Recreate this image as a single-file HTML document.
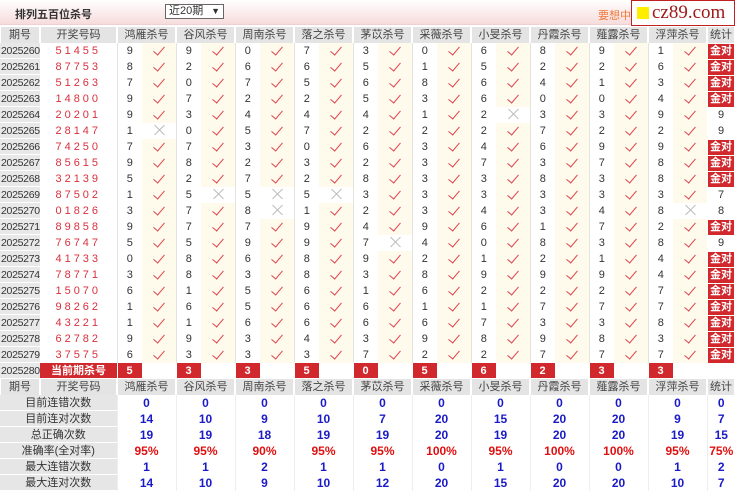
<!DOCTYPE html>
<html><head><meta charset="utf-8">
<style>
body{margin:0;width:735px;height:493px;overflow:hidden;background:#fff;font:11px "Liberation Sans","Noto Sans CJK SC",sans-serif;color:#333}
.top{position:relative;height:25px;margin-bottom:2px;background:linear-gradient(#fff,#f7dcdc);border-bottom:1px solid #f0d0d0;box-sizing:border-box}
.top .tt{position:absolute;left:15px;top:6px;font-weight:bold;font-size:11px;color:#333}
.top .sel{position:absolute;left:165px;top:4px;width:54px;height:13px;border:1px solid #666;background:#fff;font-size:11px;line-height:13px;padding-left:3px;box-sizing:content-box}
.top .sel span{position:absolute;right:3px;top:0;font-size:9px;font-weight:bold}
.top .yx{position:absolute;left:598px;top:7px;color:#f07838;font-size:11px}
.logo{position:absolute;left:631px;top:0;width:104px;height:26px;border:1px solid #c02020;background:#fff;box-sizing:border-box}
.logo .sq{position:absolute;left:5px;top:6px;width:12px;height:12px;background:#ffee00}
.logo .tx{position:absolute;left:20px;top:1px;font:19px "Liberation Serif",serif;color:#a01818;line-height:22px}
table{border-collapse:collapse;table-layout:fixed;width:735px}
td{height:16px;padding:0;text-align:center;line-height:16px;white-space:nowrap}
.h td{background:#e4e4e4;box-shadow:inset 1px 0 #fff,inset -1px 0 #fff;color:#444}
.q{background:linear-gradient(#e8e8e8 15px,#fff 15px);color:#333;font-size:10.5px;letter-spacing:-0.3px;text-align:left;padding-left:1px}
.k{color:#d8303c;letter-spacing:3px}
.n{border-left:1px solid #e4e4dc;color:#333}
.y{background:#fffbec}
.t{color:#333}
.t b{display:block;margin:0 1px;background:#d0282c;color:#fff;font-weight:bold;height:15px;line-height:15px}
i.c{display:inline-block;width:5px;height:10px;border:solid #e0404a;border-width:0 1.6px 1.6px 0;transform:rotate(40deg);margin-top:-4px;vertical-align:middle}
i.x{display:inline-block;position:relative;width:12px;height:12px;vertical-align:middle;margin-top:-2px}
i.x:before,i.x:after{content:"";position:absolute;left:6px;top:-1px;width:1px;height:14px;background:#b8b8b8;transform:rotate(45deg)}
i.x:after{transform:rotate(-45deg)}
.cur td.kr{background:#d0282c;color:#fff;font-weight:bold;box-shadow:inset 0 -1px #fff}
.cur td.r{background:#d0282c;color:#fff;font-weight:bold;box-shadow:inset 0 -1px #fff,inset 1px 0 #fff}
.s td.l{background:#e6e6e6;box-shadow:inset 0 -1px #fff;color:#333}
.s td.v{color:#1a1ac8;font-weight:bold;font-size:12px;border-left:1px solid #eee}
.s td.p{color:#e01010;font-weight:bold;font-size:12px;border-left:1px solid #eee}
</style></head><body>
<div class="top"><div class="tt">排列五百位杀号</div><div class="sel">近20期<span>▼</span></div><div class="yx">要想中</div>
<div class="logo"><div class="sq"></div><div class="tx">cz89.com</div></div></div>
<table>
<colgroup><col style="width:40px"><col style="width:77px">
<col style="width:25px"><col style="width:34px"><col style="width:25px"><col style="width:34px"><col style="width:25px"><col style="width:34px"><col style="width:25px"><col style="width:34px"><col style="width:25px"><col style="width:34px"><col style="width:25px"><col style="width:34px"><col style="width:25px"><col style="width:34px"><col style="width:25px"><col style="width:34px"><col style="width:25px"><col style="width:34px"><col style="width:25px"><col style="width:34px"><col style="width:28px"></colgroup>
<tr class="h"><td>期号</td><td>开奖号码</td><td colspan="2">鸿雁杀号</td><td colspan="2">谷风杀号</td><td colspan="2">周南杀号</td><td colspan="2">落之杀号</td><td colspan="2">茅苡杀号</td><td colspan="2">采薇杀号</td><td colspan="2">小旻杀号</td><td colspan="2">丹霞杀号</td><td colspan="2">薤露杀号</td><td colspan="2">浮萍杀号</td><td>统计</td></tr>
<tr><td class="q">2025260</td><td class="k">51455</td><td class="n">9</td><td class="y"><i class="c"></i></td><td class="n">9</td><td class="y"><i class="c"></i></td><td class="n">0</td><td class="y"><i class="c"></i></td><td class="n">7</td><td class="y"><i class="c"></i></td><td class="n">3</td><td class="y"><i class="c"></i></td><td class="n">0</td><td class="y"><i class="c"></i></td><td class="n">6</td><td class="y"><i class="c"></i></td><td class="n">8</td><td class="y"><i class="c"></i></td><td class="n">9</td><td class="y"><i class="c"></i></td><td class="n">1</td><td class="y"><i class="c"></i></td><td class="t"><b>金对</b></td></tr>
<tr><td class="q">2025261</td><td class="k">87753</td><td class="n">8</td><td class="y"><i class="c"></i></td><td class="n">2</td><td class="y"><i class="c"></i></td><td class="n">6</td><td class="y"><i class="c"></i></td><td class="n">6</td><td class="y"><i class="c"></i></td><td class="n">5</td><td class="y"><i class="c"></i></td><td class="n">1</td><td class="y"><i class="c"></i></td><td class="n">5</td><td class="y"><i class="c"></i></td><td class="n">2</td><td class="y"><i class="c"></i></td><td class="n">2</td><td class="y"><i class="c"></i></td><td class="n">6</td><td class="y"><i class="c"></i></td><td class="t"><b>金对</b></td></tr>
<tr><td class="q">2025262</td><td class="k">51263</td><td class="n">7</td><td class="y"><i class="c"></i></td><td class="n">0</td><td class="y"><i class="c"></i></td><td class="n">7</td><td class="y"><i class="c"></i></td><td class="n">5</td><td class="y"><i class="c"></i></td><td class="n">6</td><td class="y"><i class="c"></i></td><td class="n">8</td><td class="y"><i class="c"></i></td><td class="n">6</td><td class="y"><i class="c"></i></td><td class="n">4</td><td class="y"><i class="c"></i></td><td class="n">1</td><td class="y"><i class="c"></i></td><td class="n">3</td><td class="y"><i class="c"></i></td><td class="t"><b>金对</b></td></tr>
<tr><td class="q">2025263</td><td class="k">14800</td><td class="n">9</td><td class="y"><i class="c"></i></td><td class="n">7</td><td class="y"><i class="c"></i></td><td class="n">2</td><td class="y"><i class="c"></i></td><td class="n">2</td><td class="y"><i class="c"></i></td><td class="n">5</td><td class="y"><i class="c"></i></td><td class="n">3</td><td class="y"><i class="c"></i></td><td class="n">6</td><td class="y"><i class="c"></i></td><td class="n">0</td><td class="y"><i class="c"></i></td><td class="n">0</td><td class="y"><i class="c"></i></td><td class="n">4</td><td class="y"><i class="c"></i></td><td class="t"><b>金对</b></td></tr>
<tr><td class="q">2025264</td><td class="k">20201</td><td class="n">9</td><td class="y"><i class="c"></i></td><td class="n">3</td><td class="y"><i class="c"></i></td><td class="n">4</td><td class="y"><i class="c"></i></td><td class="n">4</td><td class="y"><i class="c"></i></td><td class="n">4</td><td class="y"><i class="c"></i></td><td class="n">1</td><td class="y"><i class="c"></i></td><td class="n">2</td><td><i class="x"></i></td><td class="n">3</td><td class="y"><i class="c"></i></td><td class="n">3</td><td class="y"><i class="c"></i></td><td class="n">9</td><td class="y"><i class="c"></i></td><td class="t">9</td></tr>
<tr><td class="q">2025265</td><td class="k">28147</td><td class="n">1</td><td><i class="x"></i></td><td class="n">0</td><td class="y"><i class="c"></i></td><td class="n">5</td><td class="y"><i class="c"></i></td><td class="n">7</td><td class="y"><i class="c"></i></td><td class="n">2</td><td class="y"><i class="c"></i></td><td class="n">2</td><td class="y"><i class="c"></i></td><td class="n">2</td><td class="y"><i class="c"></i></td><td class="n">7</td><td class="y"><i class="c"></i></td><td class="n">2</td><td class="y"><i class="c"></i></td><td class="n">2</td><td class="y"><i class="c"></i></td><td class="t">9</td></tr>
<tr><td class="q">2025266</td><td class="k">74250</td><td class="n">7</td><td class="y"><i class="c"></i></td><td class="n">7</td><td class="y"><i class="c"></i></td><td class="n">3</td><td class="y"><i class="c"></i></td><td class="n">0</td><td class="y"><i class="c"></i></td><td class="n">6</td><td class="y"><i class="c"></i></td><td class="n">3</td><td class="y"><i class="c"></i></td><td class="n">4</td><td class="y"><i class="c"></i></td><td class="n">6</td><td class="y"><i class="c"></i></td><td class="n">9</td><td class="y"><i class="c"></i></td><td class="n">9</td><td class="y"><i class="c"></i></td><td class="t"><b>金对</b></td></tr>
<tr><td class="q">2025267</td><td class="k">85615</td><td class="n">9</td><td class="y"><i class="c"></i></td><td class="n">8</td><td class="y"><i class="c"></i></td><td class="n">2</td><td class="y"><i class="c"></i></td><td class="n">3</td><td class="y"><i class="c"></i></td><td class="n">2</td><td class="y"><i class="c"></i></td><td class="n">3</td><td class="y"><i class="c"></i></td><td class="n">7</td><td class="y"><i class="c"></i></td><td class="n">3</td><td class="y"><i class="c"></i></td><td class="n">7</td><td class="y"><i class="c"></i></td><td class="n">8</td><td class="y"><i class="c"></i></td><td class="t"><b>金对</b></td></tr>
<tr><td class="q">2025268</td><td class="k">32139</td><td class="n">5</td><td class="y"><i class="c"></i></td><td class="n">2</td><td class="y"><i class="c"></i></td><td class="n">7</td><td class="y"><i class="c"></i></td><td class="n">2</td><td class="y"><i class="c"></i></td><td class="n">8</td><td class="y"><i class="c"></i></td><td class="n">3</td><td class="y"><i class="c"></i></td><td class="n">3</td><td class="y"><i class="c"></i></td><td class="n">8</td><td class="y"><i class="c"></i></td><td class="n">3</td><td class="y"><i class="c"></i></td><td class="n">8</td><td class="y"><i class="c"></i></td><td class="t"><b>金对</b></td></tr>
<tr><td class="q">2025269</td><td class="k">87502</td><td class="n">1</td><td class="y"><i class="c"></i></td><td class="n">5</td><td><i class="x"></i></td><td class="n">5</td><td><i class="x"></i></td><td class="n">5</td><td><i class="x"></i></td><td class="n">3</td><td class="y"><i class="c"></i></td><td class="n">3</td><td class="y"><i class="c"></i></td><td class="n">3</td><td class="y"><i class="c"></i></td><td class="n">3</td><td class="y"><i class="c"></i></td><td class="n">3</td><td class="y"><i class="c"></i></td><td class="n">3</td><td class="y"><i class="c"></i></td><td class="t">7</td></tr>
<tr><td class="q">2025270</td><td class="k">01826</td><td class="n">3</td><td class="y"><i class="c"></i></td><td class="n">7</td><td class="y"><i class="c"></i></td><td class="n">8</td><td><i class="x"></i></td><td class="n">1</td><td class="y"><i class="c"></i></td><td class="n">2</td><td class="y"><i class="c"></i></td><td class="n">3</td><td class="y"><i class="c"></i></td><td class="n">4</td><td class="y"><i class="c"></i></td><td class="n">3</td><td class="y"><i class="c"></i></td><td class="n">4</td><td class="y"><i class="c"></i></td><td class="n">8</td><td><i class="x"></i></td><td class="t">8</td></tr>
<tr><td class="q">2025271</td><td class="k">89858</td><td class="n">9</td><td class="y"><i class="c"></i></td><td class="n">7</td><td class="y"><i class="c"></i></td><td class="n">7</td><td class="y"><i class="c"></i></td><td class="n">9</td><td class="y"><i class="c"></i></td><td class="n">4</td><td class="y"><i class="c"></i></td><td class="n">9</td><td class="y"><i class="c"></i></td><td class="n">6</td><td class="y"><i class="c"></i></td><td class="n">1</td><td class="y"><i class="c"></i></td><td class="n">7</td><td class="y"><i class="c"></i></td><td class="n">2</td><td class="y"><i class="c"></i></td><td class="t"><b>金对</b></td></tr>
<tr><td class="q">2025272</td><td class="k">76747</td><td class="n">5</td><td class="y"><i class="c"></i></td><td class="n">5</td><td class="y"><i class="c"></i></td><td class="n">9</td><td class="y"><i class="c"></i></td><td class="n">9</td><td class="y"><i class="c"></i></td><td class="n">7</td><td><i class="x"></i></td><td class="n">4</td><td class="y"><i class="c"></i></td><td class="n">0</td><td class="y"><i class="c"></i></td><td class="n">8</td><td class="y"><i class="c"></i></td><td class="n">3</td><td class="y"><i class="c"></i></td><td class="n">8</td><td class="y"><i class="c"></i></td><td class="t">9</td></tr>
<tr><td class="q">2025273</td><td class="k">41733</td><td class="n">0</td><td class="y"><i class="c"></i></td><td class="n">8</td><td class="y"><i class="c"></i></td><td class="n">6</td><td class="y"><i class="c"></i></td><td class="n">8</td><td class="y"><i class="c"></i></td><td class="n">9</td><td class="y"><i class="c"></i></td><td class="n">2</td><td class="y"><i class="c"></i></td><td class="n">1</td><td class="y"><i class="c"></i></td><td class="n">2</td><td class="y"><i class="c"></i></td><td class="n">1</td><td class="y"><i class="c"></i></td><td class="n">4</td><td class="y"><i class="c"></i></td><td class="t"><b>金对</b></td></tr>
<tr><td class="q">2025274</td><td class="k">78771</td><td class="n">3</td><td class="y"><i class="c"></i></td><td class="n">8</td><td class="y"><i class="c"></i></td><td class="n">3</td><td class="y"><i class="c"></i></td><td class="n">8</td><td class="y"><i class="c"></i></td><td class="n">3</td><td class="y"><i class="c"></i></td><td class="n">8</td><td class="y"><i class="c"></i></td><td class="n">9</td><td class="y"><i class="c"></i></td><td class="n">9</td><td class="y"><i class="c"></i></td><td class="n">9</td><td class="y"><i class="c"></i></td><td class="n">4</td><td class="y"><i class="c"></i></td><td class="t"><b>金对</b></td></tr>
<tr><td class="q">2025275</td><td class="k">15070</td><td class="n">6</td><td class="y"><i class="c"></i></td><td class="n">1</td><td class="y"><i class="c"></i></td><td class="n">5</td><td class="y"><i class="c"></i></td><td class="n">6</td><td class="y"><i class="c"></i></td><td class="n">1</td><td class="y"><i class="c"></i></td><td class="n">6</td><td class="y"><i class="c"></i></td><td class="n">2</td><td class="y"><i class="c"></i></td><td class="n">2</td><td class="y"><i class="c"></i></td><td class="n">2</td><td class="y"><i class="c"></i></td><td class="n">7</td><td class="y"><i class="c"></i></td><td class="t"><b>金对</b></td></tr>
<tr><td class="q">2025276</td><td class="k">98262</td><td class="n">1</td><td class="y"><i class="c"></i></td><td class="n">6</td><td class="y"><i class="c"></i></td><td class="n">5</td><td class="y"><i class="c"></i></td><td class="n">6</td><td class="y"><i class="c"></i></td><td class="n">6</td><td class="y"><i class="c"></i></td><td class="n">1</td><td class="y"><i class="c"></i></td><td class="n">1</td><td class="y"><i class="c"></i></td><td class="n">7</td><td class="y"><i class="c"></i></td><td class="n">7</td><td class="y"><i class="c"></i></td><td class="n">7</td><td class="y"><i class="c"></i></td><td class="t"><b>金对</b></td></tr>
<tr><td class="q">2025277</td><td class="k">43221</td><td class="n">1</td><td class="y"><i class="c"></i></td><td class="n">1</td><td class="y"><i class="c"></i></td><td class="n">6</td><td class="y"><i class="c"></i></td><td class="n">6</td><td class="y"><i class="c"></i></td><td class="n">6</td><td class="y"><i class="c"></i></td><td class="n">6</td><td class="y"><i class="c"></i></td><td class="n">7</td><td class="y"><i class="c"></i></td><td class="n">3</td><td class="y"><i class="c"></i></td><td class="n">3</td><td class="y"><i class="c"></i></td><td class="n">8</td><td class="y"><i class="c"></i></td><td class="t"><b>金对</b></td></tr>
<tr><td class="q">2025278</td><td class="k">62782</td><td class="n">9</td><td class="y"><i class="c"></i></td><td class="n">9</td><td class="y"><i class="c"></i></td><td class="n">3</td><td class="y"><i class="c"></i></td><td class="n">4</td><td class="y"><i class="c"></i></td><td class="n">3</td><td class="y"><i class="c"></i></td><td class="n">9</td><td class="y"><i class="c"></i></td><td class="n">8</td><td class="y"><i class="c"></i></td><td class="n">9</td><td class="y"><i class="c"></i></td><td class="n">8</td><td class="y"><i class="c"></i></td><td class="n">3</td><td class="y"><i class="c"></i></td><td class="t"><b>金对</b></td></tr>
<tr><td class="q">2025279</td><td class="k">37575</td><td class="n">6</td><td class="y"><i class="c"></i></td><td class="n">3</td><td class="y"><i class="c"></i></td><td class="n">3</td><td class="y"><i class="c"></i></td><td class="n">3</td><td class="y"><i class="c"></i></td><td class="n">7</td><td class="y"><i class="c"></i></td><td class="n">2</td><td class="y"><i class="c"></i></td><td class="n">2</td><td class="y"><i class="c"></i></td><td class="n">7</td><td class="y"><i class="c"></i></td><td class="n">7</td><td class="y"><i class="c"></i></td><td class="n">7</td><td class="y"><i class="c"></i></td><td class="t"><b>金对</b></td></tr>
<tr class="cur"><td class="q">2025280</td><td class="kr">当前期杀号</td><td class="r">5</td><td></td><td class="r">3</td><td></td><td class="r">3</td><td></td><td class="r">5</td><td></td><td class="r">0</td><td></td><td class="r">5</td><td></td><td class="r">6</td><td></td><td class="r">2</td><td></td><td class="r">3</td><td></td><td class="r">3</td><td></td><td></td></tr>
<tr class="h"><td>期号</td><td>开奖号码</td><td colspan="2">鸿雁杀号</td><td colspan="2">谷风杀号</td><td colspan="2">周南杀号</td><td colspan="2">落之杀号</td><td colspan="2">茅苡杀号</td><td colspan="2">采薇杀号</td><td colspan="2">小旻杀号</td><td colspan="2">丹霞杀号</td><td colspan="2">薤露杀号</td><td colspan="2">浮萍杀号</td><td>统计</td></tr>
<tr class="s"><td class="l" colspan="2">目前连错次数</td><td class="v" colspan="2">0</td><td class="v" colspan="2">0</td><td class="v" colspan="2">0</td><td class="v" colspan="2">0</td><td class="v" colspan="2">0</td><td class="v" colspan="2">0</td><td class="v" colspan="2">0</td><td class="v" colspan="2">0</td><td class="v" colspan="2">0</td><td class="v" colspan="2">0</td><td class="v">0</td></tr>
<tr class="s"><td class="l" colspan="2">目前连对次数</td><td class="v" colspan="2">14</td><td class="v" colspan="2">10</td><td class="v" colspan="2">9</td><td class="v" colspan="2">10</td><td class="v" colspan="2">7</td><td class="v" colspan="2">20</td><td class="v" colspan="2">15</td><td class="v" colspan="2">20</td><td class="v" colspan="2">20</td><td class="v" colspan="2">9</td><td class="v">7</td></tr>
<tr class="s"><td class="l" colspan="2">总正确次数</td><td class="v" colspan="2">19</td><td class="v" colspan="2">19</td><td class="v" colspan="2">18</td><td class="v" colspan="2">19</td><td class="v" colspan="2">19</td><td class="v" colspan="2">20</td><td class="v" colspan="2">19</td><td class="v" colspan="2">20</td><td class="v" colspan="2">20</td><td class="v" colspan="2">19</td><td class="v">15</td></tr>
<tr class="s"><td class="l" colspan="2">准确率(全对率)</td><td class="p" colspan="2">95%</td><td class="p" colspan="2">95%</td><td class="p" colspan="2">90%</td><td class="p" colspan="2">95%</td><td class="p" colspan="2">95%</td><td class="p" colspan="2">100%</td><td class="p" colspan="2">95%</td><td class="p" colspan="2">100%</td><td class="p" colspan="2">100%</td><td class="p" colspan="2">95%</td><td class="p">75%</td></tr>
<tr class="s"><td class="l" colspan="2">最大连错次数</td><td class="v" colspan="2">1</td><td class="v" colspan="2">1</td><td class="v" colspan="2">2</td><td class="v" colspan="2">1</td><td class="v" colspan="2">1</td><td class="v" colspan="2">0</td><td class="v" colspan="2">1</td><td class="v" colspan="2">0</td><td class="v" colspan="2">0</td><td class="v" colspan="2">1</td><td class="v">2</td></tr>
<tr class="s"><td class="l" colspan="2">最大连对次数</td><td class="v" colspan="2">14</td><td class="v" colspan="2">10</td><td class="v" colspan="2">9</td><td class="v" colspan="2">10</td><td class="v" colspan="2">12</td><td class="v" colspan="2">20</td><td class="v" colspan="2">15</td><td class="v" colspan="2">20</td><td class="v" colspan="2">20</td><td class="v" colspan="2">10</td><td class="v">7</td></tr>
</table>
</body></html>
